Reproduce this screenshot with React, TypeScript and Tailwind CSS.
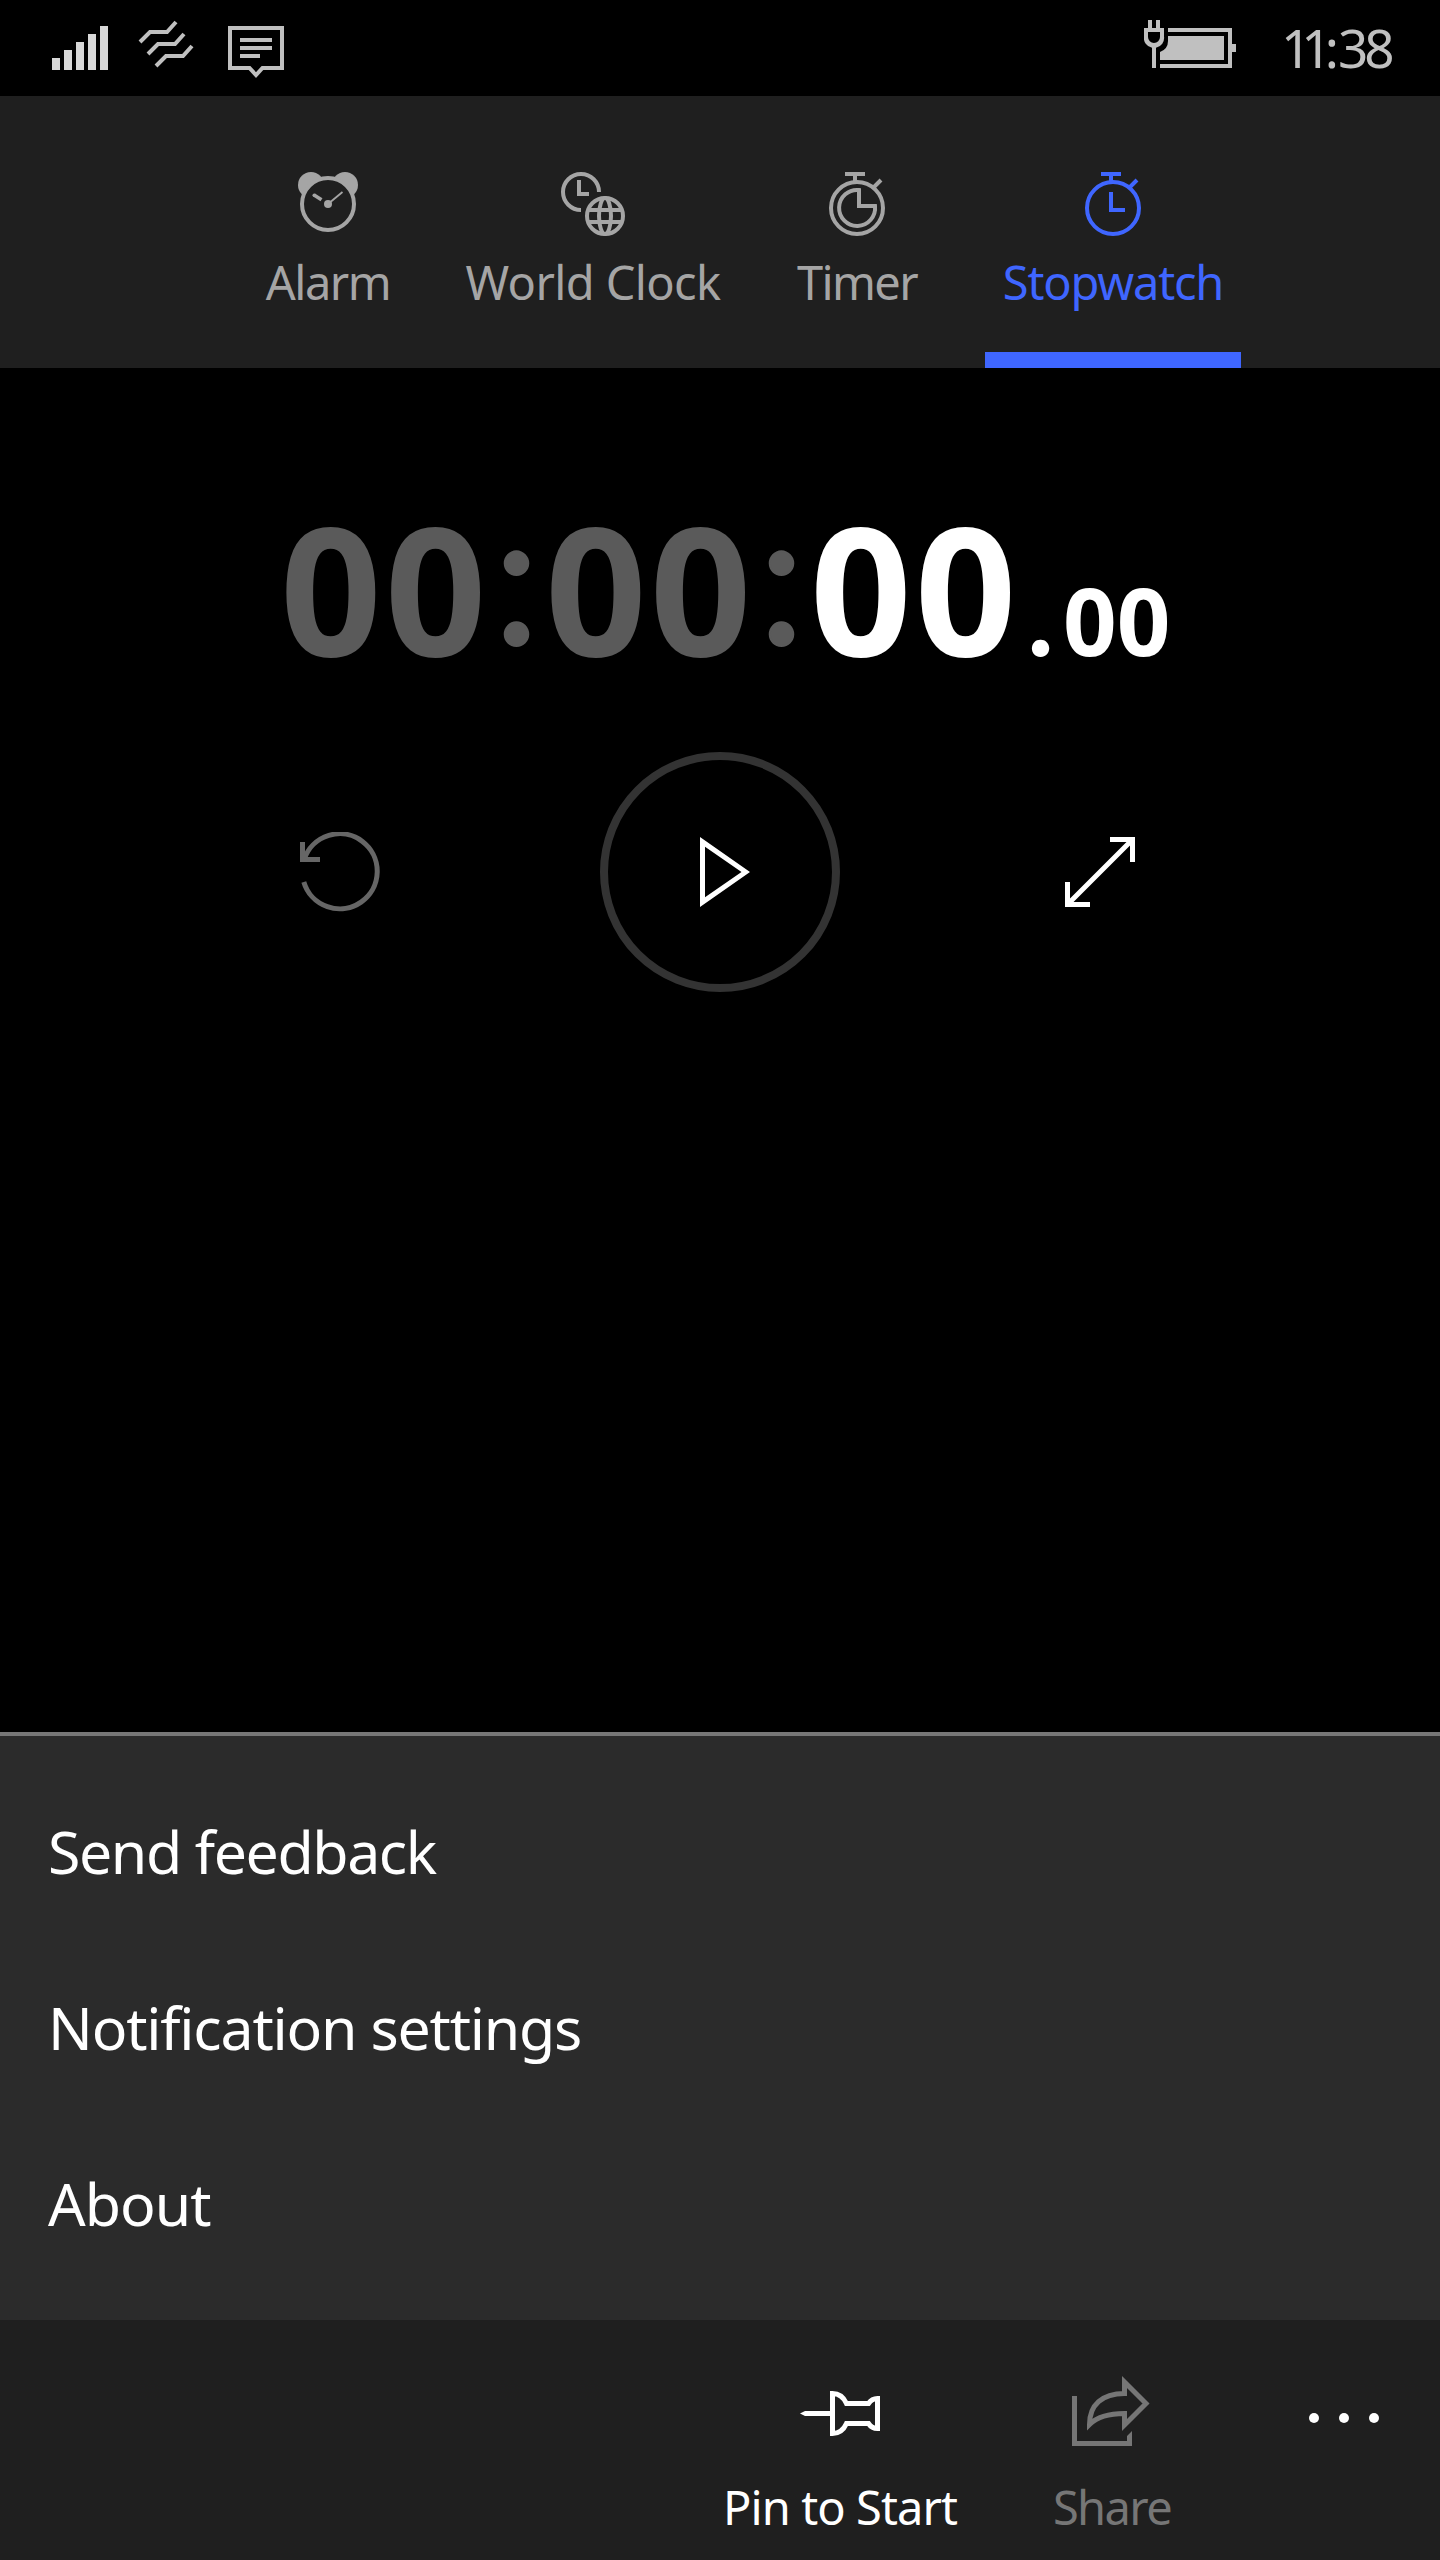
import type { ReactNode } from 'react';

function SignalIcon() {
  return (
    <svg className="h-11 w-14" viewBox="0 0 56 44" fill="#d8d8d8" shapeRendering="crispEdges">
      <rect x="0" y="32" width="8" height="12" />
      <rect x="12" y="24" width="8" height="20" />
      <rect x="24" y="16" width="8" height="28" />
      <rect x="36" y="8" width="8" height="36" />
      <rect x="48" y="0" width="8" height="44" />
    </svg>
  );
}

function VibrateIcon() {
  return (
    <svg className="h-12 w-14" viewBox="138 20 56 48" fill="none" stroke="#c0c0c0" strokeWidth="4">
      <path d="M140 42 L150 32 H167 L176 22" />
      <path d="M148 54 L158 44 H175 L184 34" />
      <path d="M156 66 L166 56 H183 L192 46" />
    </svg>
  );
}

function MessageIcon() {
  return (
    <svg className="h-[52px] w-14" viewBox="228 26 56 52" fill="none" stroke="#c0c0c0" strokeWidth="4">
      <path d="M230 28 H282 V68 H262.5 L256 75 L249.5 68 H230 Z" />
      <path d="M240 40 H272 M240 48 H272 M240 56 H260" />
    </svg>
  );
}

function BatteryIcon() {
  return (
    <svg className="h-12 w-[92px]" viewBox="1144 20 92 48" fill="#c0c0c0">
      <path d="M1148 20h4v8h4v-8h4v8h4v8.500a10 10 0 0 1-8 11.300V68h-4V47.800a10 10 0 0 1-8-11.300V28h4zM1148 32v5a6 6 0 0 0 12 0v-5z" fillRule="evenodd" />
      <path d="M1168 28H1232V44H1236V52H1232V68H1160V64H1228V32H1168Z" />
      <path d="M1168 36H1224V60H1160V52Q1168 49 1168 41Z" />
    </svg>
  );
}

function AlarmIcon() {
  return (
    <svg className="h-16 w-20" viewBox="288 172 80 64" fill="none">
      <circle cx="311" cy="185" r="13" fill="#a5a5a5" />
      <circle cx="345" cy="185" r="13" fill="#a5a5a5" />
      <circle cx="328" cy="204" r="26" fill="#1f1f1f" stroke="#a5a5a5" strokeWidth="4" />
      <circle cx="328" cy="204" r="4" fill="#a5a5a5" />
      <path d="M314 195 L321.500 199.700" stroke="#a5a5a5" strokeWidth="3.600" />
      <circle cx="314.300" cy="195.200" r="1.800" fill="#a5a5a5" />
      <path d="M328 204 L342.500 192" stroke="#a5a5a5" strokeWidth="1.800" />
    </svg>
  );
}

function WorldClockIcon() {
  return (
    <svg className="h-16 w-20" viewBox="553 172 80 64" fill="none" stroke="#a5a5a5" strokeWidth="4">
      <path d="M599 192 A18 18 0 1 0 581 210" />
      <path d="M579 180 V194 H589" />
      <circle cx="605" cy="216" r="18" />
      <ellipse cx="605" cy="216" rx="6" ry="18" />
      <path d="M588 210 H622 M588 222 H622" />
    </svg>
  );
}

function TimerIcon() {
  return (
    <svg className="h-16 w-20" viewBox="817 172 80 64" fill="none" stroke="#a5a5a5" strokeWidth="4">
      <circle cx="857" cy="208" r="26" />
      <path d="M845 174 H865 M855 174 V182 M874 187 L881 180" />
      <path d="M859 190 A18 18 0 1 0 875 206 H859 Z" />
    </svg>
  );
}

function StopwatchIcon() {
  return (
    <svg className="h-16 w-20" viewBox="1073 172 80 64" fill="none" stroke="#3f66ff" strokeWidth="4">
      <circle cx="1113" cy="208" r="26" />
      <path d="M1101 174 H1121 M1111 174 V182 M1130 187 L1137 180" />
      <path d="M1111 192 V210 H1125" />
    </svg>
  );
}

function ResetIcon() {
  return (
    <svg className="h-20 w-20" viewBox="300 832 80 80" fill="none" stroke="#666666" strokeWidth="5">
      <path d="M304.300 859 A37.500 37.500 0 1 1 303.800 882" />
      <path d="M302.500 842 V859.500 H320" />
    </svg>
  );
}

function PlayIcon() {
  return (
    <svg className="h-[70px] w-[50px]" viewBox="0 0 50 70" fill="#ffffff">
      <path fillRule="evenodd" d="M0 0 L50 35 L0 70 Z M5 9.700 V60.300 L41.500 35 Z" />
    </svg>
  );
}

function ExpandIcon() {
  return (
    <svg className="h-[70px] w-[70px]" viewBox="0 0 70 70" fill="none" stroke="#ffffff" strokeWidth="5">
      <path d="M45 2.500 H67.500 V25 M2.500 45 V67.500 H25 M3 67 L67 3" />
    </svg>
  );
}

function PinIcon() {
  return (
    <svg className="h-20 w-20" viewBox="10 10 80 80" fill="none" stroke="#ffffff" strokeWidth="5">
      <path d="M42.500 28.500 C50 28.500 54 33 56.500 38.500 H78.500 C80.500 35.500 83 33.500 87.500 33.500 V63.500 C83 63.500 80.500 61.500 78.500 58.500 H56.500 C54 64 50 68.500 42.500 68.500 Z" />
      <path d="M10 48.500 L15 46 H40 V51 H15 Z" fill="#ffffff" stroke="none" />
    </svg>
  );
}

function ShareIcon() {
  return (
    <svg className="h-20 w-20" viewBox="12 10 80 80" fill="none" stroke="#767676" strokeWidth="5">
      <path d="M64.500 17 L86 38.500 L64.500 60 V48.500 C52 48.500 38 51 29.500 59.500 C29.500 40 42 28.500 64.500 28.500 Z" />
      <path d="M12 31 H17 V76 H67 V71 L72 66 V81 H12 Z" fill="#767676" stroke="none" />
    </svg>
  );
}

function Tab({ icon, label, className }: { icon: ReactNode; label: string; className: string }) {
  return (
    <button className={`flex h-full flex-col items-center border-b-[16px] pt-[76px] ${className}`}>
      {icon}
      <span className="mt-[14px] whitespace-nowrap text-[47px] leading-[64px]">{label}</span>
    </button>
  );
}

function Colon() {
  return (
    <span className="relative -top-[11px] w-[57px] text-center font-['Lato',sans-serif] text-[188px] font-normal [-webkit-text-stroke:2px_#5a5a5a]">
      :
    </span>
  );
}

export default function App() {
  return (
    <div className="flex h-[2560px] w-[1440px] flex-col overflow-hidden bg-black font-['Noto_Sans',sans-serif] text-white">
      <header className="flex h-24 shrink-0 items-start pl-[52px] pr-[48px]">
        <div className="pt-[26px]"><SignalIcon /></div>
        <div className="ml-[30px] pt-5"><VibrateIcon /></div>
        <div className="ml-[34px] pt-[26px]"><MessageIcon /></div>
        <div className="ml-auto pt-5"><BatteryIcon /></div>
        <span className="ml-[45px] w-[111px] whitespace-nowrap pt-4 text-[53px] leading-[64px] text-[#c0c0c0]">
          <span className="tracking-[-10px]">1</span>
          <span className="tracking-[-7px]">1</span>
          <span className="tracking-[-1px]">:</span>
          <span className="tracking-[-4px]">38</span>
        </span>
      </header>

      <nav className="flex h-[272px] shrink-0 bg-[#1f1f1f] pl-[199px]">
        <Tab icon={<AlarmIcon />} label="Alarm" className="w-[258px] border-transparent tracking-[-1.5px] text-[#a5a5a5]" />
        <Tab icon={<WorldClockIcon />} label="World Clock" className="w-[272px] border-transparent tracking-[-0.6px] text-[#a5a5a5]" />
        <Tab icon={<TimerIcon />} label="Timer" className="w-[256px] border-transparent tracking-[-1.6px] text-[#a5a5a5]" />
        <Tab icon={<StopwatchIcon />} label="Stopwatch" className="w-[256px] border-[#3f66ff] tracking-[-1.2px] text-[#3f66ff]" />
      </nav>

      <main className="flex grow flex-col">
        <div className="mt-[95px] flex h-[240px] items-baseline whitespace-nowrap pl-[280px] text-[178px] font-bold leading-[240px] text-[#5a5a5a]">
          <span className="w-[208px] tracking-[3px]">00</span>
          <Colon />
          <span className="w-[208px] tracking-[3px]">00</span>
          <Colon />
          <span className="w-[217px] tracking-[3px] text-white">00</span>
          <span className="w-[36px] font-['Lato',sans-serif] text-[114px] text-white">.</span>
          <span className="text-[94px] text-white">00</span>
        </div>
        <div className="mt-[49px] flex h-[240px] items-center pl-[300px] pr-[305px]">
          <button><ResetIcon /></button>
          <button className="ml-[220px] flex size-60 items-center justify-center rounded-full border-8 border-[#333333] pl-[10px]">
            <PlayIcon />
          </button>
          <button className="ml-auto"><ExpandIcon /></button>
        </div>
      </main>

      <section className="flex h-[588px] shrink-0 flex-col border-t-4 border-[#767676] bg-[#2b2b2b] pl-12 pt-[27px] text-[59px] leading-[176px] tracking-[-1.2px]">
        <button className="h-44 text-left tracking-[-1.4px]">Send feedback</button>
        <button className="h-44 text-left">Notification settings</button>
        <button className="h-44 text-left tracking-[-1px]">About</button>
      </section>

      <footer className="flex h-60 shrink-0 bg-[#1f1f1f] pl-[712px] text-[47px] leading-[64px]">
        <button className="flex w-[256px] flex-col items-center pt-[55px]">
          <PinIcon />
          <span className="mt-[20px] whitespace-nowrap tracking-[-0.9px]">Pin to Start</span>
        </button>
        <button className="flex w-[288px] flex-col items-center pt-[55px] text-[#767676]">
          <ShareIcon />
          <span className="mt-[20px] tracking-[-1.6px]">Share</span>
        </button>
        <button className="ml-[53px] mt-[93px] flex h-[10px] gap-5">
          <i className="size-[10px] rounded-full bg-white" />
          <i className="size-[10px] rounded-full bg-white" />
          <i className="size-[10px] rounded-full bg-white" />
        </button>
      </footer>
    </div>
  );
}
